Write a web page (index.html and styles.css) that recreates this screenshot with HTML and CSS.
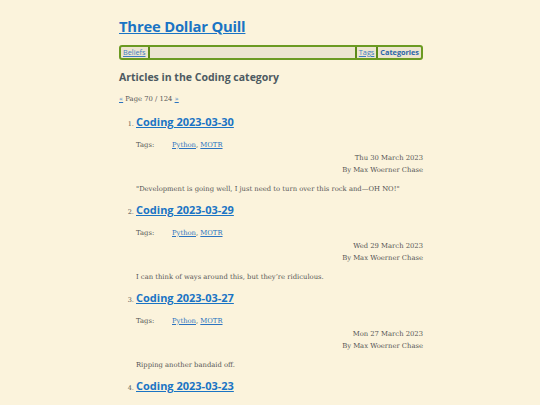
FILE: index.html
```html
<!DOCTYPE html>
<html>
<head>
<meta charset="utf-8">
<link rel="stylesheet" href="styles.css">
</head>
<body>
<div class="page">
  <header>
    <h1 class="site-title"><a href="#">Three Dollar Quill</a></h1>
    <nav class="nav">
      <a href="#" class="nav-item">Beliefs</a>
      <span class="nav-fill"></span>
      <a href="#" class="nav-item sep">Tags</a>
      <a href="#" class="nav-item sep active">Categories</a>
    </nav>
  </header>
  <h2 class="cat-title">Articles in the Coding category</h2>
  <p class="pager"><a href="#">«</a> Page 70 / 124 <a href="#">»</a></p>
  <ol class="articles">
    <li>
      <h3 class="a-title"><a href="#">Coding 2023-03-30</a></h3>
      <div class="tags"><span class="tags-label">Tags:</span><span><a href="#">Python</a>, <a href="#">MOTR</a></span></div>
      <div class="meta">Thu 30 March 2023<br>By Max Woerner Chase</div>
      <p class="summary">"Development is going well, I just need to turn over this rock and—OH NO!"</p>
    </li>
    <li>
      <h3 class="a-title"><a href="#">Coding 2023-03-29</a></h3>
      <div class="tags"><span class="tags-label">Tags:</span><span><a href="#">Python</a>, <a href="#">MOTR</a></span></div>
      <div class="meta">Wed 29 March 2023<br>By Max Woerner Chase</div>
      <p class="summary">I can think of ways around this, but they’re ridiculous.</p>
    </li>
    <li>
      <h3 class="a-title"><a href="#">Coding 2023-03-27</a></h3>
      <div class="tags"><span class="tags-label">Tags:</span><span><a href="#">Python</a>, <a href="#">MOTR</a></span></div>
      <div class="meta">Mon 27 March 2023<br>By Max Woerner Chase</div>
      <p class="summary">Ripping another bandaid off.</p>
    </li>
    <li>
      <h3 class="a-title"><a href="#">Coding 2023-03-23</a></h3>
      <div class="tags"><span class="tags-label">Tags:</span><span><a href="#">Python</a>, <a href="#">MOTR</a></span></div>
      <div class="meta">Thu 23 March 2023<br>By Max Woerner Chase</div>
      <p class="summary">More work.</p>
    </li>
  </ol>
</div>
</body>
</html>
```
FILE: styles.css
```css
html, body {
  margin: 0;
  padding: 0;
  background: #fbf3dc;
}
body {
  font-family: "DejaVu Serif", serif;
  font-size: 6.8px;
  color: #555;
}
a { color: #2b73c0; }
.page {
  width: 304px;
  margin: 0 auto;
  padding-top: 15px;
  padding-left: 2px;
}
.site-title {
  font-family: "Open Sans", sans-serif;
  font-size: 14.8px;
  font-weight: 700;
  margin: 0 0 8px 0;
  line-height: 22px;
  letter-spacing: -0.2px;
}
.site-title a { color: #1a74c4; }
.nav {
  display: flex;
  align-items: center;
  border: 2px solid #6b9a22;
  border-radius: 3px;
  background: #ede5d0;
  height: 11px;
  padding: 0 2px;
  font-family: "Open Sans", sans-serif;
  font-size: 7.3px;
}
.nav-item {
  color: #3d7cc0;
  line-height: 11px;
}
.nav-item:first-child {
  padding-right: 2px;
  border-right: 2px solid #5c8a1a;
}
.nav-fill { flex: 1; }
.nav-item.sep {
  border-left: 2px solid #5c8a1a;
  padding: 0 2px 0 2px;
}
.nav-item.active {
  font-weight: 700;
  color: #2a64a8;
  text-decoration: none;
  padding-right: 0;
}
.cat-title {
  font-family: "Open Sans", sans-serif;
  font-size: 10.5px;
  font-weight: 700;
  color: #4d5a61;
  margin: 8px 0 0 0;
  line-height: 18px;
}
.pager {
  margin: 8px 0 0 0;
  font-size: 6.8px;
  line-height: 10px;
}
.articles {
  margin: 9px 0 0 0;
  padding-left: 17px;
}
.articles li {
  font-size: 6.5px;
  padding-bottom: 7px;
}
.a-title {
  font-family: "Open Sans", sans-serif;
  font-size: 11px;
  font-weight: 700;
  margin: 0;
  line-height: 18px;
}
.a-title a { color: #1a74c4; }
.tags {
  display: flex;
  font-size: 6.8px;
  margin-top: 9px;
  line-height: 10px;
}
.tags-label { width: 36px; }
.meta {
  text-align: right;
  font-size: 6.8px;
  line-height: 12px;
  margin-top: 2px;
}
.summary {
  font-size: 6.8px;
  margin: 8px 0 0 0;
  line-height: 10px;
}
```
